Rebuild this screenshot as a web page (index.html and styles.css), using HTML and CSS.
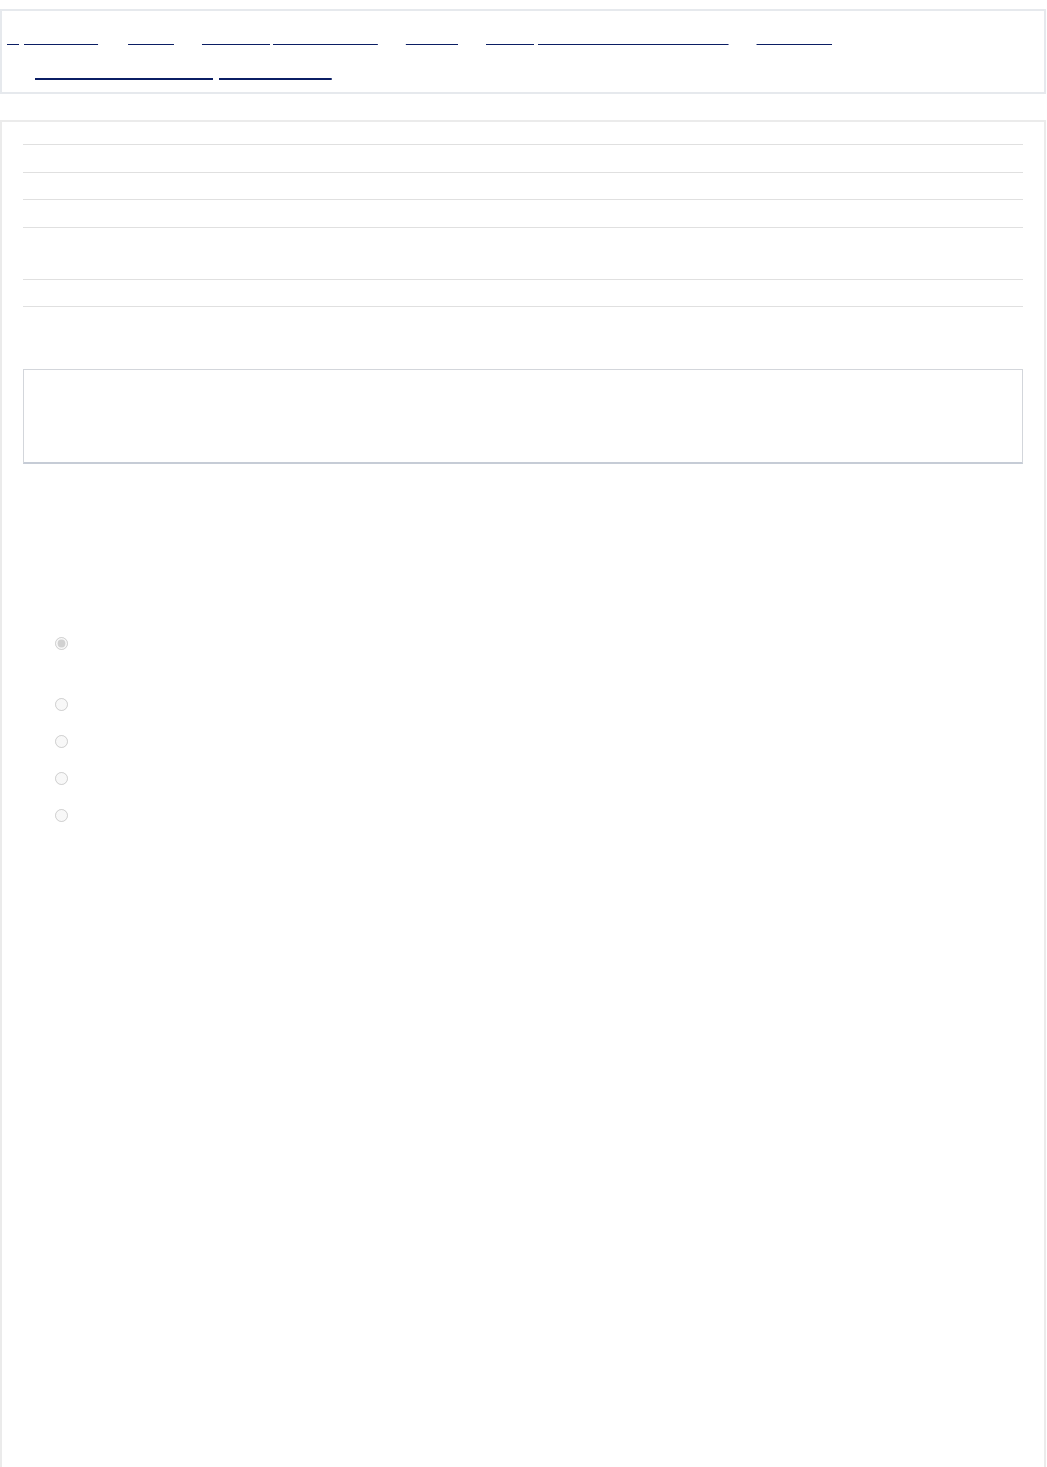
FILE: index.html
```html
<!DOCTYPE html>
<html lang="en">
<head>
    <meta charset="UTF-8">
    <meta name="viewport" content="width=device-width, initial-scale=1.0">
    <title>Midterm Examination</title>
    <link rel="stylesheet" href="styles.css">
</head>
<body>
    <nav class="topbar">
        <ul class="menu">
            <li><a href="#">My Dashboard</a></li>
            <li><a href="#">Grades</a></li>
            <li><a href="#">Discussion, Announcements</a></li>
            <li><a href="#">Lessons</a></li>
            <li><a href="#">Contact, Technical Assistance Services</a></li>
            <li><a href="#">Preferences</a></li>
        </ul>
        <p class="course-title"><a href="#">Midterm Examination, Section Four</a></p>
    </nav>

    <main class="page">
        <table class="summary">
            <tbody>
                <tr><th>Started on</th><td>Monday, 14 March 2022, 10:02 AM</td></tr>
                <tr><th>State</th><td>Finished</td></tr>
                <tr><th>Completed on</th><td>Monday, 14 March 2022, 10:48 AM</td></tr>
                <tr><th>Time taken</th><td>46 mins 12 secs<br>Time limit 60 mins</td></tr>
                <tr><th>Marks</th><td>18.00 / 20.00</td></tr>
                <tr><th>Grade</th><td>90.00 out of 100.00</td></tr>
            </tbody>
        </table>

        <div class="feedback">
            <div>Overall feedback</div>
            <div>Well done, you have passed this attempt.</div>
        </div>

        <section class="question">
            <h3>Question 1</h3>
            <p>Which of the following statements best describes the purpose of the review stage?<br>Select one answer.</p>

            <ul class="options">
                <li>
                    <label>
                        <input type="radio" name="q1" checked disabled>
                        <span>To compare the results of each attempt against the expected outcome<br>and record any differences for the next planning session</span>
                    </label>
                </li>
                <li><label><input type="radio" name="q1" disabled><span>To assign new tasks to the team</span></label></li>
                <li><label><input type="radio" name="q1" disabled><span>To close the project without feedback</span></label></li>
                <li><label><input type="radio" name="q1" disabled><span>To change the project budget</span></label></li>
                <li><label><input type="radio" name="q1" disabled><span>None of the above</span></label></li>
            </ul>
        </section>
    </main>
</body>
</html>
```

FILE: styles.css
```css
body {
    margin: 0;
    font-family: "Liberation Sans", Arial, sans-serif;
    font-size: 14px;
    color: #fff;
    background-color: #fff;
}

a {
    color: #fff;
    text-decoration: underline;
    text-decoration-color: #0b1e64;
}

.topbar {
    margin: 9px 1px 0 0;
    border: 2px solid #e6e9ed;
    padding: 17px 5px 9px;
}

.menu {
    display: flex;
    gap: 28px;
    margin: 0;
    padding: 0;
    list-style: none;
    line-height: 20px;
}

.menu li:first-child {
    margin-right: 2px;
}

.course-title {
    margin: 11px 0 0 28px;
    font-size: 19px;
    line-height: 24px;
}

.course-title a {
    text-decoration-thickness: 2px;
}

.page {
    margin: 26px 1px 0 0;
    border: 2px solid #ebebeb;
    border-bottom: none;
    padding: 22px 21px 0;
    min-height: 1400px;
}

.summary {
    width: 100%;
    border-collapse: collapse;
    line-height: 24.5px;
}

.summary th,
.summary td {
    border-top: 1px solid #e0e0e0;
    padding: 1px 0 1px;
    text-align: left;
    font-weight: normal;
    vertical-align: top;
}

.summary th {
    width: 180px;
}

.feedback {
    margin-top: 35.5px;
    border: 1px solid #d3d6db;
    border-bottom: 2px solid #c6ccd6;
    padding: 21px 20px 22px;
    line-height: 24.5px;
}

.question {
    padding-top: 38px;
    line-height: 24.5px;
}

.question h3 {
    margin: 0;
    font-size: 14px;
    line-height: 24.5px;
}

.question p {
    margin: 12.25px 0 0;
}

.options {
    margin: 37px 0 0;
    padding: 0 0 0 31.5px;
    list-style: none;
}

.options label {
    display: flex;
    align-items: flex-start;
    gap: 10px;
    padding: 6.5px 0;
    line-height: 24px;
}

.options input {
    margin: 5.5px 0 0;
}
```
